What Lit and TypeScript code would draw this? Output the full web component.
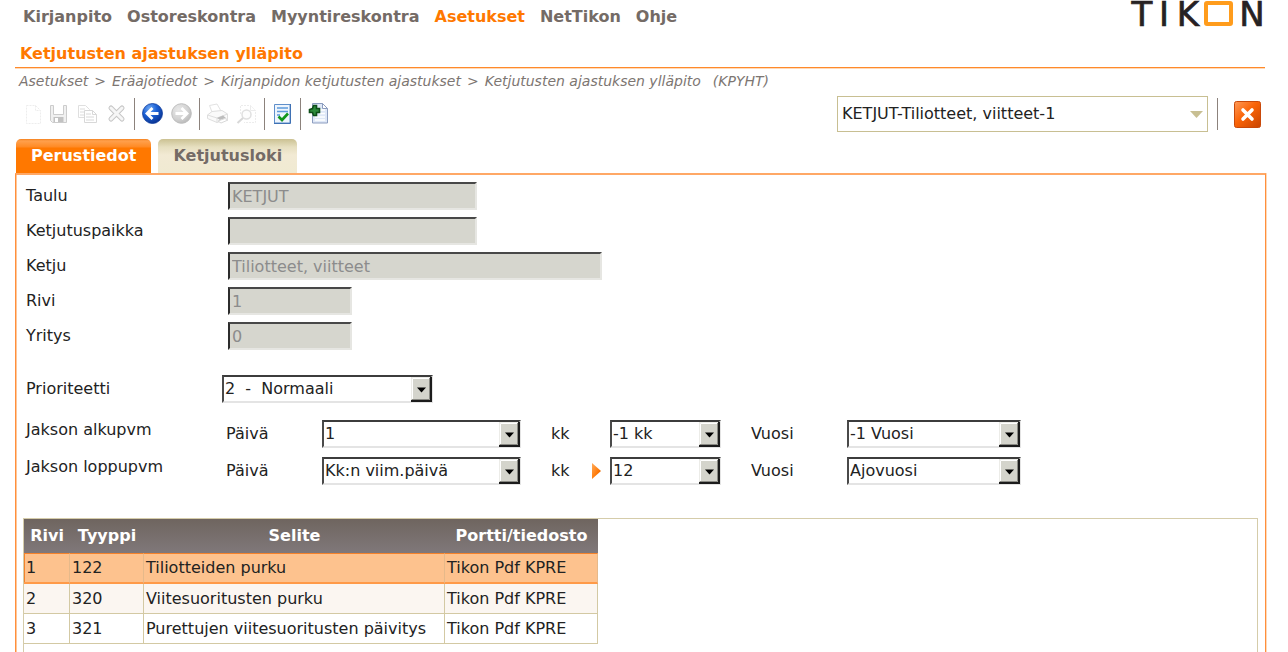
import { LitElement, html, svg, css } from "lit";
import { customElement, property } from "lit/decorators.js";
import { classMap } from "lit/directives/class-map.js";

interface Tool {
  name: string;
  enabled: boolean;
  icon: unknown;
}

interface PeriodPart {
  id: string;
  label: string;
  size: string;
  value: string;
  marked?: boolean;
}

const NAV = ["Kirjanpito", "Ostoreskontra", "Myyntireskontra", "Asetukset", "NetTikon", "Ohje"];

const CRUMBS = ["Asetukset", "Eräajotiedot", "Kirjanpidon ketjutusten ajastukset", "Ketjutusten ajastuksen ylläpito"];

const TOOL_GROUPS: Tool[][] = [
  [
    {
      name: "Uusi",
      enabled: false,
      icon: svg`<path d="M11.5 7.5H20.500L25.500 12.500V25.500H11.500ZM20.500 7.500V12.500H25.500" fill="none" stroke="#ededed" stroke-dasharray="2 1"/>`,
    },
    {
      name: "Tallenna",
      enabled: false,
      icon: svg`<path d="M6.500 7.500H9.500V16.500H19.500V7.500H22.500V24.500H8.500L6.500 22.500Z" fill="#f0f0f0" stroke="#cccccc"/>
        <path d="M10 7H19V16H10Z" fill="#fff"/><path d="M9.500 24V19H19.500V24Z" fill="#c2c2c2"/><path d="M11 20H14V24H11Z" fill="#fff"/>`,
    },
    {
      name: "Kopioi",
      enabled: false,
      icon: svg`<path d="M5.500 7.500H12.500L16.500 11.500V19.500H5.500Z" fill="#fff" stroke="#dfdfdf"/>
        <path d="M7 11H12M7 14H12M7 17H12" stroke="#dcdcdc"/>
        <path d="M11.500 12.500H19.500L23.500 16.500V24.500H11.500Z" fill="#fff" stroke="#d8d8d8"/>
        <path d="M19.500 12.500V16.500H23.500M13 16H18M13 19H21M13 22H21" fill="none" stroke="#d8d8d8"/>`,
    },
    {
      name: "Poista",
      enabled: false,
      icon: svg`<path d="M9 10L20 21M20 10L9 21" stroke="#c6c6c6" stroke-width="5" stroke-linecap="round"/>
        <path d="M9 10L20 21M20 10L9 21" stroke="#f6f6f6" stroke-width="3" stroke-linecap="round"/>`,
    },
  ],
  [
    {
      name: "Edellinen",
      enabled: true,
      icon: svg`<defs><radialGradient id="blue" cx=".35" cy=".25" r=".8"><stop offset="0" stop-color="#6fa8f2"/><stop offset=".45" stop-color="#1d62d6"/><stop offset="1" stop-color="#08318f"/></radialGradient></defs>
        <circle cx="14.500" cy="15.500" r="10" fill="url(#blue)" stroke="#0b3a9c" stroke-width=".8"/>
        <path d="M20.500 15.500H9M14.500 10L9 15.500L14.500 21" fill="none" stroke="#fff" stroke-width="2.800"/>`,
    },
    {
      name: "Seuraava",
      enabled: false,
      icon: svg`<defs><radialGradient id="grey" cx=".35" cy=".3" r=".8"><stop offset="0" stop-color="#e8e8e8"/><stop offset=".6" stop-color="#d2d2d2"/><stop offset="1" stop-color="#b4b4b4"/></radialGradient></defs>
        <circle cx="14.500" cy="15.500" r="9.800" fill="url(#grey)" stroke="#bebebe"/>
        <path d="M8.500 15.500H20M14.500 10L20 15.500L14.500 21" fill="none" stroke="#fff" stroke-width="2.800"/>`,
    },
  ],
  [
    {
      name: "Tulosta",
      enabled: false,
      icon: svg`<path d="M9 14L6.500 7.500L14 6L18 13" fill="#fff" stroke="#e2e2e2"/>
        <path d="M4.500 17L9 13.500L19 12.500L24.500 16V21L14 24.500L4.500 20.500Z" fill="#fafafa" stroke="#dedede"/>
        <path d="M4.500 17L14 20L24.500 16M14 20V24.500" fill="none" stroke="#dedede"/>
        <path d="M14 20L20 17.500L23 20L17 22Z" fill="#bdbdbd"/><path d="M15 23L22 20.500L25 22L18 25Z" fill="#fff" stroke="#d8d8d8"/>`,
    },
    {
      name: "Esikatselu",
      enabled: false,
      icon: svg`<path d="M8.500 16V7.500H18.500L23.500 12.500V24.500H12" fill="none" stroke="#ececec" stroke-dasharray="2 1"/>
        <path d="M18.500 7.500V12.500H23.500" fill="none" stroke="#ececec"/>
        <circle cx="14.500" cy="16.500" r="4.500" fill="#fdfdfd" stroke="#e0e0e0" stroke-width="1.500"/>
        <path d="M11 20L5.500 25" stroke="#d8d8d8" stroke-width="2"/>`,
    },
  ],
  [
    {
      name: "Tarkista",
      enabled: true,
      icon: svg`<path d="M6.500 6.500H22V25H6.500Z" fill="#eef5fd" stroke="#5f8fca"/>
        <path d="M6 25.500H22.500V6" fill="none" stroke="#3f71b4"/>
        <path d="M9 10H20M9 13.500H20M9 17H12" stroke="#5d9adb" stroke-width="1.400"/>
        <path d="M10.500 18.500L14 22L20 15.500" fill="none" stroke="#12961c" stroke-width="2.600"/>`,
    },
  ],
  [
    {
      name: "Lisää",
      enabled: true,
      icon: svg`<path d="M8.500 5.500H18.500L23.500 10.500V25H8.500Z" fill="#dfe8f7" stroke="#8c9dbf"/>
        <path d="M18.500 5.500V10.500H23.500Z" fill="#fff" stroke="#8c9dbf"/>
        <path d="M15 12H21M15 15.500H21M11 19H21M11 22H21" stroke="#fff" stroke-width="1.500"/>
        <path d="M9.500 7.500H12.500V10.500H15.500V14.500H12.500V17.500H9.500L8.500 14.500H5.500V11.500L8.500 10.500Z" fill="#2c8a3a" stroke="#0d4d18" stroke-width="1.600"/>`,
    },
  ],
];

const FIELDS = [
  { id: "taulu", label: "Taulu", value: "KETJUT", size: "medium" },
  { id: "paikka", label: "Ketjutuspaikka", value: "", size: "medium" },
  { id: "ketju", label: "Ketju", value: "Tiliotteet, viitteet", size: "wide" },
  { id: "rivi", label: "Rivi", value: "1", size: "narrow" },
  { id: "yritys", label: "Yritys", value: "0", size: "narrow" },
];

const PERIODS: { label: string; parts: PeriodPart[] }[] = [
  {
    label: "Jakson alkupvm",
    parts: [
      { id: "alku-paiva", label: "Päivä", size: "day", value: "1" },
      { id: "alku-kk", label: "kk", size: "month", value: "-1 kk" },
      { id: "alku-vuosi", label: "Vuosi", size: "year", value: "-1 Vuosi" },
    ],
  },
  {
    label: "Jakson loppupvm",
    parts: [
      { id: "loppu-paiva", label: "Päivä", size: "day", value: "Kk:n viim.päivä" },
      { id: "loppu-kk", label: "kk", size: "month", value: "12", marked: true },
      { id: "loppu-vuosi", label: "Vuosi", size: "year", value: "Ajovuosi" },
    ],
  },
];

const ROWS = [
  ["1", "122", "Tiliotteiden purku", "Tikon Pdf KPRE"],
  ["2", "320", "Viitesuoritusten purku", "Tikon Pdf KPRE"],
  ["3", "321", "Purettujen viitesuoritusten päivitys", "Tikon Pdf KPRE"],
];

/* Drop-down with a bevelled arrow button laid over a native select. */
@customElement("tikon-select")
class TikonSelect extends LitElement {
  @property() value = "";
  @property() label = "";

  static styles = css`
    :host {
      display: grid;
      height: 28px;
    }
    .control,
    .arrow {
      grid-area: 1 / 1;
    }
    .control {
      appearance: none;
      box-sizing: border-box;
      width: 100%;
      height: 28px;
      margin: 0;
      padding: 0 24px 2px 1px;
      border: 2px solid;
      border-color: #3c3c3c #e4e4e4 #e4e4e4 #4a4a4a;
      border-radius: 0;
      background: #fff;
      color: #222;
      font: 16px "DejaVu Sans", Verdana, sans-serif;
      white-space: pre;
      outline: 0;
    }
    .arrow {
      justify-self: end;
      pointer-events: none;
    }
  `;

  render() {
    return html`
      <select class="control" aria-label=${this.label}>
        <option>${this.value}</option>
      </select>
      <svg class="arrow" width="22" height="28" aria-hidden="true">
        <rect x="0" y="2" width="21" height="25" fill="#1c1c1c" />
        <rect x="0" y="2" width="19" height="23" fill="#d4d4cc" />
        <path d="M.5 24V2.500H19" fill="none" stroke="#ecece8" />
        <path d="M1.500 24V3.500H18" fill="none" stroke="#fff" />
        <path d="M1 24.500H18.500V3" fill="none" stroke="#8a8a84" />
        <path d="M6 12.500H15L10.500 17.500Z" fill="#000" />
      </svg>
    `;
  }
}

@customElement("app-root")
class AppRoot extends LitElement {
  static styles = css`
    :host {
      display: flex;
      flex-direction: column;
      box-sizing: border-box;
      min-height: 100vh;
      padding: 0 22px 0 15px;
      background: #fff;
      color: #222;
      font: 16px/20px "DejaVu Sans", Verdana, sans-serif;
    }
    .top {
      display: flex;
      justify-content: space-between;
      height: 42px;
    }
    .nav {
      display: flex;
      gap: 15px;
      padding: 7px 0 0 8px;
      font-weight: bold;
    }
    .nav-link {
      color: #746b66;
      text-decoration: none;
    }
    .nav-link.current {
      color: #ff7800;
    }
    .logo {
      display: block;
      font-size: 34px;
    }
    .title {
      margin: 0 1px 0 0;
      padding: 2px 0 3px 5px;
      border-bottom: 1px solid #ff8a2a;
      box-shadow: 0 1px #ffd9b8;
      color: #ff7800;
      font-size: 16px;
      line-height: 20px;
    }
    .crumbs {
      display: flex;
      gap: 6px;
      padding: 3px 0 0 4px;
      color: #7d7672;
      font-size: 14px;
      font-style: italic;
    }
    .crumb {
      color: inherit;
      text-decoration: none;
    }
    .code {
      margin-left: 6px;
    }
    .toolbar {
      display: flex;
      align-items: center;
      height: 38px;
      margin-top: 4px;
    }
    .group {
      display: flex;
    }
    .group + .group::before,
    .divider {
      content: "";
      width: 1px;
      height: 32px;
      margin: 0 3px;
      background: #8c827c;
    }
    .tool,
    .close {
      display: block;
      margin: 0;
      padding: 0;
      border: 0;
      background: none;
    }
    .tool-icon {
      display: block;
    }
    .picker {
      display: grid;
      width: 371px;
      margin-left: auto;
    }
    .picker-select,
    .picker-arrow {
      grid-area: 1 / 1;
    }
    .picker-select {
      appearance: none;
      box-sizing: border-box;
      width: 100%;
      height: 36px;
      padding: 0 28px 2px 4px;
      border: 1px solid #c8bf92;
      border-radius: 0;
      background: #fff;
      color: #222;
      font: 16px "DejaVu Sans", Verdana, sans-serif;
    }
    .picker-arrow {
      align-self: center;
      justify-self: end;
      margin-right: 5px;
      pointer-events: none;
    }
    .toolbar .divider {
      margin: 0 16px 0 9px;
    }
    .close {
      margin-right: 5px;
    }
    .tabs {
      display: flex;
      gap: 7px;
      margin: 6px 0 0 1px;
    }
    .tab {
      height: 34px;
      padding: 0 15px;
      border: 0;
      border-radius: 5px 5px 0 0;
      background: linear-gradient(#cbc192, #e6dfc0 8px, #f2ead4 16px, #f0ead2);
      color: #746b66;
      font: bold 16px/20px "DejaVu Sans", Verdana, sans-serif;
    }
    .tab.active {
      background: linear-gradient(#f5821f, #ffa04c 2px, #ff8a24 8px, #ff7800 9px);
      color: #fff;
    }
    .panel {
      display: flex;
      flex: 1;
      flex-direction: column;
      border: solid #ff8f3c;
      border-width: 2px 1px 0 1px;
      border-top-color: #ffa866;
      box-shadow: inset 1px 0 #ffc79a, 1px 0 #ffd9b8;
      padding: 7px 7px 0;
    }
    .fields {
      display: grid;
      gap: 7px;
    }
    .field {
      display: grid;
      grid-template-columns: 202px 1fr;
      align-items: center;
      padding-left: 3px;
    }
    .input {
      box-sizing: border-box;
      height: 28px;
      margin: 0;
      padding: 0 2px;
      border: 2px solid;
      border-color: #484848 #e6e6e2 #e6e6e2 #2c2c2c;
      border-radius: 0;
      background: #d6d6ce;
      color: #8c8c8c;
      font: 16px "DejaVu Sans", Verdana, sans-serif;
    }
    .narrow {
      width: 124px;
    }
    .medium {
      width: 249px;
    }
    .wide {
      width: 374px;
    }
    .priority {
      display: grid;
      grid-template-columns: 196px 211px;
      align-items: center;
      margin-top: 25px;
      padding-left: 3px;
    }
    .periods {
      display: grid;
      gap: 9px;
      margin-top: 17px;
    }
    .period {
      display: grid;
      grid-template-columns: 200px 96px 199px 30px 59px 111px 30px 96px 174px;
      align-items: center;
      padding-left: 3px;
    }
    .period-name {
      align-self: start;
    }
    .day {
      grid-column: 3;
    }
    .month-label {
      display: flex;
      grid-column: 5;
      align-items: center;
      justify-content: space-between;
      padding-right: 8px;
    }
    .month {
      grid-column: 6;
    }
    .year-label {
      grid-column: 8;
    }
    .grid-frame {
      flex: 1;
      margin-top: 33px;
      border: solid #d5ccaa;
      border-width: 1px 1px 0 1px;
    }
    .table {
      border-spacing: 0;
      width: 574px;
      table-layout: fixed;
    }
    .col-row {
      width: 46px;
    }
    .col-type {
      width: 74px;
    }
    .col-text {
      width: 301px;
    }
    .head {
      height: 34px;
      padding: 0;
      background: linear-gradient(#6f655f, #80787a);
      color: #fff;
    }
    .cell {
      height: 29px;
      padding: 0 2px;
      border: 1px solid #d3c9a3;
      border-width: 0 1px 1px 0;
      white-space: nowrap;
    }
    .hover .cell {
      background: #fbf6f1;
    }
    .selected .cell {
      height: 28px;
      border-top: 1px solid #f5822a;
      border-bottom: 2px solid #ff9a48;
      border-right-color: #e6b98a;
      background: #fdc28e;
    }
    .selected .cell:first-child {
      box-shadow: inset 1px 0 #f5822a;
    }
  `;

  private renderPart(part: PeriodPart) {
    return html`
      <span class="${part.size}-label">
        ${part.label}
        ${part.marked
          ? html`<svg width="10" height="18" aria-hidden="true">
              <defs><linearGradient id="mark" x1="0" y1="0" x2="1" y2="1"><stop offset="0" stop-color="#ffac5c" /><stop offset=".6" stop-color="#ff7a08" /><stop offset="1" stop-color="#b64c00" /></linearGradient></defs>
              <path d="M0 1L9 9L0 17Z" fill="url(#mark)" />
            </svg>`
          : ""}
      </span>
      <tikon-select class=${part.size} .label=${part.label} .value=${part.value}></tikon-select>
    `;
  }

  render() {
    return html`
      <header class="top">
        <nav class="nav">
          ${NAV.map(
            (item) => html`<a href="#" class=${classMap({ "nav-link": true, current: item === "Asetukset" })}>${item}</a>`
          )}
        </nav>
        <svg class="logo" width="140" height="36" role="img" aria-label="Tikon" fill="#262223" stroke="#262223" stroke-width=".7" text-anchor="middle">
          <text x="16" y="26">T</text>
          <text x="38" y="26">I</text>
          <text x="62" y="26">K</text>
          <rect x="80" y="3" width="25" height="21" rx="1" fill="none" stroke="#ff9c1c" stroke-width="4" />
          <text x="126" y="26">N</text>
        </svg>
      </header>

      <h1 class="title">Ketjutusten ajastuksen ylläpito</h1>
      <nav class="crumbs" aria-label="Polku">
        ${CRUMBS.map((crumb, i) => html`${i ? html`<span>&gt;</span>` : ""}<a href="#" class="crumb">${crumb}</a>`)}
        <span class="code">(KPYHT)</span>
      </nav>

      <div class="toolbar">
        ${TOOL_GROUPS.map(
          (group) => html`<div class="group">
            ${group.map(
              (tool) => html`<button class="tool" aria-label=${tool.name} ?disabled=${!tool.enabled}>
                <svg class="tool-icon" width="29" height="32" viewBox="0 0 29 32">${tool.icon}</svg>
              </button>`
            )}
          </div>`
        )}
        <div class="picker">
          <select class="picker-select" aria-label="Ketju">
            <option>KETJUT-Tiliotteet, viitteet-1</option>
          </select>
          <svg class="picker-arrow" width="13" height="7" aria-hidden="true"><path d="M0 0H13L6.500 7Z" fill="#c8bf92" /></svg>
        </div>
        <span class="divider"></span>
        <button class="close" aria-label="Sulje">
          <svg class="tool-icon" width="27" height="27" viewBox="0 0 27 27">
            <defs><linearGradient id="close" x1="0" y1="0" x2="1" y2="1"><stop offset="0" stop-color="#ff9a58" /><stop offset=".45" stop-color="#fa6408" /><stop offset="1" stop-color="#c84400" /></linearGradient></defs>
            <rect x=".5" y=".5" width="26" height="26" rx="2" fill="url(#close)" stroke="#c9490a" />
            <path d="M9 9L18 18M18 9L9 18" stroke="#fff" stroke-width="3.600" stroke-linecap="round" />
          </svg>
        </button>
      </div>

      <div class="tabs" role="tablist">
        <button class="tab active" role="tab" aria-selected="true">Perustiedot</button>
        <button class="tab" role="tab" aria-selected="false">Ketjutusloki</button>
      </div>

      <main class="panel">
        <div class="fields">
          ${FIELDS.map(
            (field) => html`<div class="field">
              <label for=${field.id}>${field.label}</label>
              <input id=${field.id} class="input ${field.size}" .value=${field.value} disabled />
            </div>`
          )}
        </div>

        <div class="priority">
          <span>Prioriteetti</span>
          <tikon-select .label=${"Prioriteetti"} .value=${"2\u00a0 -\u00a0 Normaali"}></tikon-select>
        </div>

        <div class="periods">
          ${PERIODS.map(
            (period) => html`<div class="period" role="group" aria-label=${period.label}>
              <span class="period-name">${period.label}</span>
              ${period.parts.map((part) => this.renderPart(part))}
            </div>`
          )}
        </div>

        <div class="grid-frame">
          <table class="table">
            <colgroup>
              <col class="col-row" />
              <col class="col-type" />
              <col class="col-text" />
              <col />
            </colgroup>
            <thead>
              <tr>
                <th class="head">Rivi</th>
                <th class="head">Tyyppi</th>
                <th class="head">Selite</th>
                <th class="head">Portti/tiedosto</th>
              </tr>
            </thead>
            <tbody>
              ${ROWS.map(
                (row, i) => html`<tr class=${classMap({ selected: i === 0, hover: i === 1 })}>
                  ${row.map((text) => html`<td class="cell">${text}</td>`)}
                </tr>`
              )}
            </tbody>
          </table>
        </div>
      </main>
    `;
  }
}
